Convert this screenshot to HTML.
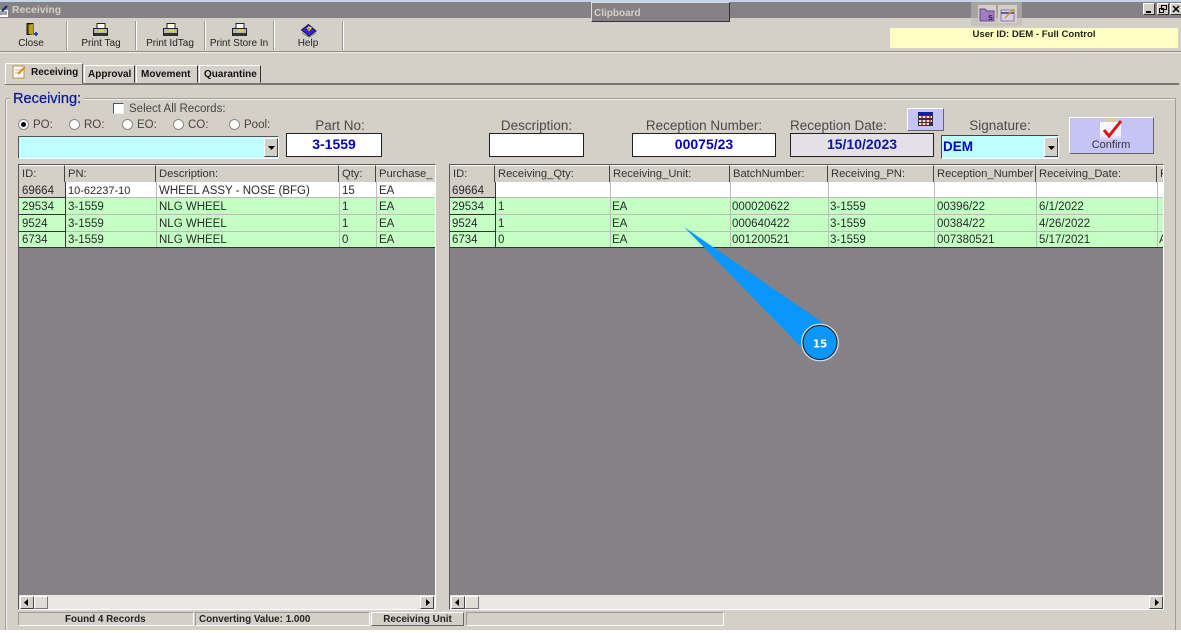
<!DOCTYPE html>
<html><head><meta charset="utf-8"><style>
html,body{margin:0;padding:0;background:#fff;overflow:hidden}
#p{position:relative;width:1181px;height:633px;overflow:hidden;background:#fff;font-family:"Liberation Sans",sans-serif;font-size:10px;color:#111}
#p div,#p span,#p svg{position:absolute}
.t{white-space:nowrap;line-height:14px}
.c{text-align:center}
.b{font-weight:bold}
.lb{font-size:13.5px;color:#4a4a4a;line-height:14px;white-space:nowrap;text-align:center}
.sep{width:1px;background:#9a9892;border-right:1px solid #fff;top:21px;height:29px}
.rd{width:9px;height:9px;border-radius:50%;background:#fff;border:1px solid #888;top:119px}
.rl{top:118px;font-size:11.5px;color:#444;white-space:nowrap;line-height:14px}
.fld{background:#fff;border:1px solid #222;box-sizing:border-box;color:#0000c8;font-weight:bold;font-size:14px;text-align:center;line-height:20px}
.grid{background:#848284;top:164px;height:446px;box-sizing:border-box;border:1px solid #555;border-right-color:#fff;border-bottom-color:#fff}
.h{background:#d4d0c8;top:165px;height:16px;border-right:1px solid #444;border-bottom:1px solid #444;font-size:11.2px;color:#333;line-height:17px;padding-left:3px;overflow:hidden;white-space:nowrap;border-top:1px solid #fff}
.r{height:16px;box-sizing:border-box;border-bottom:1px solid #bbb}
.g{background:#c4ffc4}.w{background:#fff}
.e{font-size:11.5px;line-height:16px;white-space:nowrap;color:#2a2a2a;margin-top:1px}
.v{width:1px;background:#bcbcbc;top:182px;height:65px}
.sb{top:595px;height:14px;background:#eae8e4}
.bt{top:596px;height:13px;width:14px;background:#d4d0c8;border:1px solid;border-color:#fff #444 #444 #fff;box-sizing:border-box}
.th{background:#e0ddd6;border-color:#fff #777 #777 #fff}
.st{top:612px;height:14px;background:#d4d0c8;border:1px solid;border-color:#999 #fff #fff #999;box-sizing:border-box;font-weight:bold;font-size:9.9px;line-height:13px;color:#222;white-space:nowrap}
.pb{background:#c6c3f7;border:1px solid;border-color:#fff #666 #666 #fff;box-sizing:border-box}
.tb{top:37px;width:66px;font-size:10px;color:#222;margin-top:0}
.tab{top:65px;font-size:10px;color:#111;font-weight:bold;margin-top:1px}
</style></head><body><div id="p">
<div style="left:0;top:0;width:1181px;height:2px;background:#c8d4e4"></div>
<div style="left:0;top:2px;width:1181px;height:16px;background:#848284"></div>
<div style="left:0;top:18px;width:1181px;height:612px;background:#d4d0c8"></div>
<svg style="left:0;top:5px" width="10" height="13" viewBox="0 0 10 13"><path d="M0 5h8v7H0z" fill="#fff"/><path d="M0 7h7M0 9h7" stroke="#444"/><path d="M2 6L7 1" stroke="#0a2a80" stroke-width="2"/></svg>
<div class="t b" style="left:12px;top:4px;color:#d4d0c8;font-size:10.4px;font-weight:bold">Receiving</div>
<div style="left:591px;top:2px;width:139px;height:20px;background:#848284;border:1px solid;border-color:#ddd #333 #333 #ddd;box-sizing:border-box"></div>
<div class="t b" style="left:594px;top:7px;color:#d4d0c8;font-size:10px">Clipboard</div>
<div style="left:971px;top:2px;width:51px;height:24px;background:#bdbab4;opacity:.6"></div>
<div style="left:978px;top:5px;width:18px;height:18px;background:#d4d0c8"></div>
<div style="left:998px;top:5px;width:19px;height:18px;background:#d4d0c8"></div>
<svg style="left:979px;top:7px" width="16" height="15" viewBox="0 0 16 15"><path d="M1 2h5l2 2h7v10H1z" fill="#a47fc0" stroke="#64468a"/><text x="9" y="13" font-size="9" font-weight="bold" fill="#302060" font-family="Liberation Sans">s</text></svg>
<svg style="left:1000px;top:7px" width="16" height="15" viewBox="0 0 16 15"><path d="M1 3h13v11H1z" fill="#d8d0e8" stroke="#8878a8"/><path d="M1 6h13" stroke="#6a5a9a" stroke-width="2"/><path d="M5 11L14 2" stroke="#c8a020" stroke-width="1.500"/></svg>
<div style="left:1143px;top:3px;width:12px;height:12px;background:#d4d0c8;border:1px solid;border-color:#fff #333 #333 #fff;box-sizing:border-box"></div><div style="left:1146px;top:11px;width:5px;height:2px;background:#000"></div>
<div style="left:1157px;top:3px;width:12px;height:12px;background:#d4d0c8;border:1px solid;border-color:#fff #333 #333 #fff;box-sizing:border-box"></div>
<svg style="left:1159px;top:5px" width="8" height="8" viewBox="0 0 8 8"><path d="M2.500.5h5v4h-5zM.5 3.500h4v4h-4z" fill="#d4d0c8" stroke="#000"/></svg>
<div style="left:1170px;top:3px;width:12px;height:12px;background:#d4d0c8;border:1px solid;border-color:#fff #333 #333 #fff;box-sizing:border-box"></div>
<svg style="left:1172px;top:5px" width="8" height="8"><path d="M1 1l6 6M7 1L1 7" stroke="#000" stroke-width="1.500"/></svg>

<svg style="left:25px;top:23px" width="14" height="14" viewBox="0 0 14 14"><path d="M2 .5h6v11H2z" fill="#6a5a10" stroke="#111"/><path d="M4 2l4-1v11l-4-1z" fill="#b8a020"/><path d="M9 11h4M11 9v4" stroke="#1a2ab0" stroke-width="1.500"/></svg>
<svg style="left:93px;top:23px" width="15" height="14" viewBox="0 0 15 14"><path d="M4 .5h8v5H4z" fill="#fff" stroke="#222"/><path d="M.5 5.500h14v7H.5z" fill="#b8b8b8" stroke="#222"/><path d="M1 10h13v3H1z" fill="#333"/><path d="M6 6.500h5v2H6z" fill="#e8d820"/></svg>
<svg style="left:163px;top:23px" width="15" height="14" viewBox="0 0 15 14"><path d="M4 .5h8v5H4z" fill="#fff" stroke="#222"/><path d="M.5 5.500h14v7H.5z" fill="#b8b8b8" stroke="#222"/><path d="M1 10h13v3H1z" fill="#333"/><path d="M6 6.500h5v2H6z" fill="#e8d820"/></svg>
<svg style="left:232px;top:23px" width="15" height="14" viewBox="0 0 15 14"><path d="M4 .5h8v5H4z" fill="#fff" stroke="#222"/><path d="M.5 5.500h14v7H.5z" fill="#b8b8b8" stroke="#222"/><path d="M1 10h13v3H1z" fill="#333"/><path d="M6 6.500h5v2H6z" fill="#e8d820"/></svg>
<svg style="left:301px;top:24px" width="16" height="14" viewBox="0 0 16 14"><path d="M1 9l7 4 7-4" fill="#eee" stroke="#777"/><path d="M.5 6L7.500.5 15 7l-7 5z" fill="#3a20d0" stroke="#181060"/><path d="M6 5l2-2 2 1-2 2v1" stroke="#f0d820" fill="none" stroke-width="1.500"/></svg>
<div class="t c tb" style="left:0;width:62px">Close</div>
<div class="t c tb" style="left:68px">Print Tag</div>
<div class="t c tb" style="left:137px">Print IdTag</div>
<div class="t c tb" style="left:206px">Print Store In</div>
<div class="t c tb" style="left:275px">Help</div>
<div class="sep" style="left:66px"></div><div class="sep" style="left:135px"></div><div class="sep" style="left:204px"></div><div class="sep" style="left:273px"></div><div class="sep" style="left:342px"></div>
<div style="left:890px;top:28px;width:288px;height:20px;background:#ffffc4"></div>
<div class="t c b" style="left:829px;top:28px;width:410px;font-size:9.6px;color:#222">User ID: DEM - Full Control</div>
<div style="left:0;top:51px;width:1181px;height:1px;background:#8c8a84"></div>
<div style="left:0;top:52px;width:1181px;height:1px;background:#f0efec"></div>

<div style="left:5px;top:83px;width:1174px;height:2px;background:#777"></div>
<div style="left:5px;top:63px;width:78px;height:21px;background:#d4d0c8;border:1px solid;border-color:#fff #555 #d4d0c8 #fff;box-sizing:border-box;border-radius:2px 2px 0 0"></div>
<div style="left:84px;top:65px;width:51px;height:18px;border:1px solid;border-color:#fff #333 transparent #fff;box-sizing:border-box"></div>
<div style="left:136px;top:65px;width:62px;height:18px;border:1px solid;border-color:#fff #333 transparent #fff;box-sizing:border-box"></div>
<div style="left:199px;top:65px;width:62px;height:18px;border:1px solid;border-color:#fff #333 transparent #fff;box-sizing:border-box"></div>
<svg style="left:12px;top:65px" width="15" height="14" viewBox="0 0 15 14"><path d="M1 1h11v12H1z" fill="#fff" stroke="#c89040"/><path d="M3 5h6M3 8h6" stroke="#d8b060"/><path d="M6 9l7-7" stroke="#d89020" stroke-width="2"/></svg>
<div class="t tab" style="left:31px;top:65px">Receiving</div>
<div class="t tab" style="left:88px;top:67px">Approval</div>
<div class="t tab" style="left:141px;top:67px">Movement</div>
<div class="t tab" style="left:204px;top:67px">Quarantine</div>

<div style="left:5px;top:98px;width:1171px;height:532px;border:1px solid #a09e98;border-bottom:0;box-shadow:inset 1px 1px 0 #eee;box-sizing:border-box;border-radius:3px 0 0 0"></div>
<div class="t" style="left:10px;top:91px;padding:0 3px;height:16px;background:#d4d0c8;color:#0a1a90;font-size:14.6px;line-height:17px;-webkit-text-stroke:.25px #0a1a90">Receiving:</div>
<div style="left:113px;top:103px;width:11px;height:11px;background:#fff;border:1px solid;border-color:#555 #eee #eee #555;box-sizing:border-box"></div>
<div class="t" style="left:129px;top:102px;font-size:11.500px;color:#444">Select All Records:</div>
<div class="rd" style="left:18px"></div><div style="left:21px;top:122px;width:5px;height:5px;background:#000;border-radius:50%"></div>
<div class="rl" style="left:33px">PO:</div>
<div class="rd" style="left:69px"></div><div class="rl" style="left:84px">RO:</div>
<div class="rd" style="left:122px"></div><div class="rl" style="left:137px">EO:</div>
<div class="rd" style="left:173px"></div><div class="rl" style="left:188px">CO:</div>
<div class="rd" style="left:229px"></div><div class="rl" style="left:244px">Pool:</div>
<div class="lb" style="left:286px;top:119px;width:108px">Part No:</div>
<div class="lb" style="left:489px;top:119px;width:95px">Description:</div>
<div class="lb" style="left:632px;top:119px;width:144px">Reception Number:</div>
<div class="lb" style="left:790px;top:119px;width:98px;text-align:left">Reception Date:</div>
<div class="lb" style="left:941px;top:119px;width:118px">Signature:</div>

<div style="left:18px;top:136px;width:261px;height:23px;background:#c0ffff;border:1px solid;border-color:#555 #fff #fff #555;box-sizing:border-box"></div>
<div style="left:264px;top:138px;width:14px;height:19px;background:#d4d0c8;border:1px solid;border-color:#fff #444 #444 #fff;box-sizing:border-box"></div>
<svg style="left:268px;top:146px" width="7" height="4"><path d="M0 0h7L3.500 4z" fill="#000"/></svg>
<div class="fld" style="left:286px;top:133px;width:96px;height:24px">3-1559</div>
<div class="fld" style="left:489px;top:133px;width:95px;height:24px"></div>
<div class="fld" style="left:632px;top:133px;width:144px;height:24px">00075/23</div>
<div class="fld" style="left:790px;top:133px;width:144px;height:24px;background:#e4e0e8;color:#0a1a9a">15/10/2023</div>
<div class="pb" style="left:907px;top:108px;width:37px;height:23px"></div>
<svg style="left:918px;top:112px" width="15" height="14" viewBox="0 0 15 14"><path d="M0 0h15v14H0z" fill="#333"/><path d="M0 0h15v3H0z" fill="#1020a0"/><path d="M1 4h2v2H1zM5 4h2v2H5zM9 4h2v2H9zM13 4h1v2h-1zM1 8h2v2H1zM5 8h2v2H5zM9 8h2v2H9zM13 8h1v2h-1zM1 11h2v2H1zM5 11h2v2H5zM9 11h2v2H9z" fill="#f0e0e0"/><path d="M3 4h2v2H3zM7 4h2v2H7zM11 4h2v2h-2zM3 8h2v2H3zM7 8h2v2H7zM11 8h2v2h-2zM3 11h2v2H3zM7 11h2v2H7z" fill="#d05050"/></svg>
<div style="left:941px;top:135px;width:118px;height:24px;background:#c0ffff;border:1px solid;border-color:#444 #fff #fff #444;box-sizing:border-box"></div>
<div class="t b" style="left:943px;top:140px;font-size:13.500px;color:#0000c8">DEM</div>
<div style="left:1044px;top:137px;width:14px;height:20px;background:#d4d0c8;border:1px solid;border-color:#fff #444 #444 #fff;box-sizing:border-box"></div>
<svg style="left:1048px;top:146px" width="7" height="4"><path d="M0 0h7L3.500 4z" fill="#000"/></svg>
<div class="pb" style="left:1069px;top:117px;width:85px;height:37px"></div>
<svg style="left:1100px;top:118px" width="23" height="23" viewBox="0 0 23 23"><defs><linearGradient id="cg" x1="0" y1="0" x2="0" y2="1"><stop offset="0" stop-color="#fafaff"/><stop offset=".7" stop-color="#f0f0ff"/><stop offset="1" stop-color="#c6c3f7"/></linearGradient></defs><path d="M0 4h21v19H0z" fill="url(#cg)"/><path d="M5 0h12v4H5z" fill="#d8d0a0"/><path d="M4 12l5 6L21 3" fill="none" stroke="#e01010" stroke-width="3"/></svg>
<div class="t c" style="left:1069px;top:138px;width:84px;font-size:11px;color:#333">Confirm</div>

<div class="grid" style="left:18px;width:418px"></div>
<div class="grid" style="left:449px;width:715px"></div>

<div class="h" style="left:19px;width:42px">ID:</div><div class="h" style="left:65px;width:87px">PN:</div><div class="h" style="left:156px;width:179px">Description:</div><div class="h" style="left:339px;width:33px">Qty:</div><div class="h" style="left:376px;width:56px;border-right:0">Purchase_</div>
<div class="r w" style="left:19px;top:182px;width:416px"></div><div class="r g" style="left:19px;top:198px;width:416px;height:17px"></div><div class="r g" style="left:19px;top:215px;width:416px;height:17px"></div><div class="r g" style="left:19px;top:232px;width:416px;border-bottom:1px solid #333"></div>
<div style="left:19px;top:182px;width:46px;height:16px;background:#d4d0c8;border-bottom:1px solid #333;box-sizing:border-box"></div>
<div style="left:19px;top:198px;width:46px;height:17px;border-bottom:1px solid #333;box-sizing:border-box"></div>
<div style="left:19px;top:215px;width:46px;height:17px;border-bottom:1px solid #333;box-sizing:border-box"></div>
<div style="left:65px;top:182px;width:1px;height:65px;background:#333"></div>
<div class="v" style="left:156px"></div><div class="v" style="left:339px"></div><div class="v" style="left:376px"></div>
<div class="e" style="left:22px;top:182px">69664</div><div class="e" style="left:68px;top:182px;font-size:11px">10-62237-10</div><div class="e" style="left:159px;top:182px">WHEEL ASSY - NOSE (BFG)</div><div class="e" style="left:342px;top:182px">15</div><div class="e" style="left:379px;top:182px">EA</div>
<div class="e" style="left:22px;top:198px">29534</div><div class="e" style="left:68px;top:198px">3-1559</div><div class="e" style="left:159px;top:198px">NLG WHEEL</div><div class="e" style="left:342px;top:198px">1</div><div class="e" style="left:379px;top:198px">EA</div>
<div class="e" style="left:22px;top:215px">9524</div><div class="e" style="left:68px;top:215px">3-1559</div><div class="e" style="left:159px;top:215px">NLG WHEEL</div><div class="e" style="left:342px;top:215px">1</div><div class="e" style="left:379px;top:215px">EA</div>
<div class="e" style="left:22px;top:231px">6734</div><div class="e" style="left:68px;top:231px">3-1559</div><div class="e" style="left:159px;top:231px">NLG WHEEL</div><div class="e" style="left:342px;top:231px">0</div><div class="e" style="left:379px;top:231px">EA</div>

<div class="h" style="left:450px;width:41px">ID:</div><div class="h" style="left:495px;width:111px">Receiving_Qty:</div><div class="h" style="left:610px;width:116px">Receiving_Unit:</div><div class="h" style="left:730px;width:94px">BatchNumber:</div><div class="h" style="left:828px;width:102px">Receiving_PN:</div><div class="h" style="left:934px;width:98px">Reception_Number</div><div class="h" style="left:1036px;width:117px">Receiving_Date:</div><div class="h" style="left:1157px;width:3px;border-right:0">R</div>
<div class="r w" style="left:450px;top:182px;width:713px"></div><div class="r g" style="left:450px;top:198px;width:713px;height:17px"></div><div class="r g" style="left:450px;top:215px;width:713px;height:17px"></div><div class="r g" style="left:450px;top:232px;width:713px;border-bottom:1px solid #333"></div>
<div style="left:450px;top:182px;width:45px;height:16px;background:#d4d0c8;border-bottom:1px solid #333;box-sizing:border-box"></div>
<div style="left:450px;top:198px;width:45px;height:17px;border-bottom:1px solid #333;box-sizing:border-box"></div>
<div style="left:450px;top:215px;width:45px;height:17px;border-bottom:1px solid #333;box-sizing:border-box"></div>
<div style="left:495px;top:182px;width:1px;height:65px;background:#333"></div>
<div class="v" style="left:610px"></div><div class="v" style="left:730px"></div><div class="v" style="left:828px"></div><div class="v" style="left:934px"></div><div class="v" style="left:1036px"></div><div class="v" style="left:1157px"></div>
<div class="e" style="left:452px;top:182px">69664</div>
<div class="e" style="left:452px;top:198px">29534</div><div class="e" style="left:498px;top:198px">1</div><div class="e" style="left:612px;top:198px">EA</div><div class="e" style="left:732px;top:198px">000020622</div><div class="e" style="left:830px;top:198px">3-1559</div><div class="e" style="left:937px;top:198px">00396/22</div><div class="e" style="left:1039px;top:198px">6/1/2022</div>
<div class="e" style="left:452px;top:215px">9524</div><div class="e" style="left:498px;top:215px">1</div><div class="e" style="left:612px;top:215px">EA</div><div class="e" style="left:732px;top:215px">000640422</div><div class="e" style="left:830px;top:215px">3-1559</div><div class="e" style="left:937px;top:215px">00384/22</div><div class="e" style="left:1039px;top:215px">4/26/2022</div>
<div class="e" style="left:452px;top:231px">6734</div><div class="e" style="left:498px;top:231px">0</div><div class="e" style="left:612px;top:231px">EA</div><div class="e" style="left:732px;top:231px">001200521</div><div class="e" style="left:830px;top:231px">3-1559</div><div class="e" style="left:937px;top:231px">007380521</div><div class="e" style="left:1039px;top:231px">5/17/2021</div><div class="e" style="left:1159px;top:231px;width:4px;overflow:hidden">A</div>

<div class="sb" style="left:19px;width:416px"></div><div class="sb" style="left:450px;width:713px"></div>
<div class="bt" style="left:20px"></div><div class="bt th" style="left:34px"></div><div class="bt" style="left:420px"></div>
<div class="bt" style="left:451px"></div><div class="bt th" style="left:465px"></div><div class="bt" style="left:1149px"></div>
<svg style="left:24px;top:599px" width="4" height="7"><path d="M4 0v7L0 3.500z" fill="#000"/></svg>
<svg style="left:426px;top:599px" width="4" height="7"><path d="M0 0v7l4-3.500z" fill="#000"/></svg>
<svg style="left:455px;top:599px" width="4" height="7"><path d="M4 0v7L0 3.500z" fill="#000"/></svg>
<svg style="left:1155px;top:599px" width="4" height="7"><path d="M0 0v7l4-3.500z" fill="#000"/></svg>

<div class="st" style="left:18px;width:176px;padding-left:46px">Found 4 Records</div>
<div class="st" style="left:195px;width:175px;padding-left:3px">Converting Value: 1.000</div>
<div class="st c" style="left:371px;width:93px;border-color:#fff #666 #666 #fff">Receiving Unit</div>
<div class="st" style="left:466px;width:258px"></div>

<svg style="left:0;top:0" width="1181" height="633"><path d="M684 227L822 322 801 347z" fill="#0a96fa"/><circle cx="820" cy="342.500" r="18.300" fill="#0a96fa" stroke="#ddd" stroke-width="1.200"/><circle cx="820" cy="342.500" r="17" fill="none" stroke="#222" stroke-width="1"/><text x="820" y="347.500" text-anchor="middle" font-size="10.500" font-weight="bold" fill="#fff" font-family="DejaVu Sans">15</text></svg>
</div></body></html>
